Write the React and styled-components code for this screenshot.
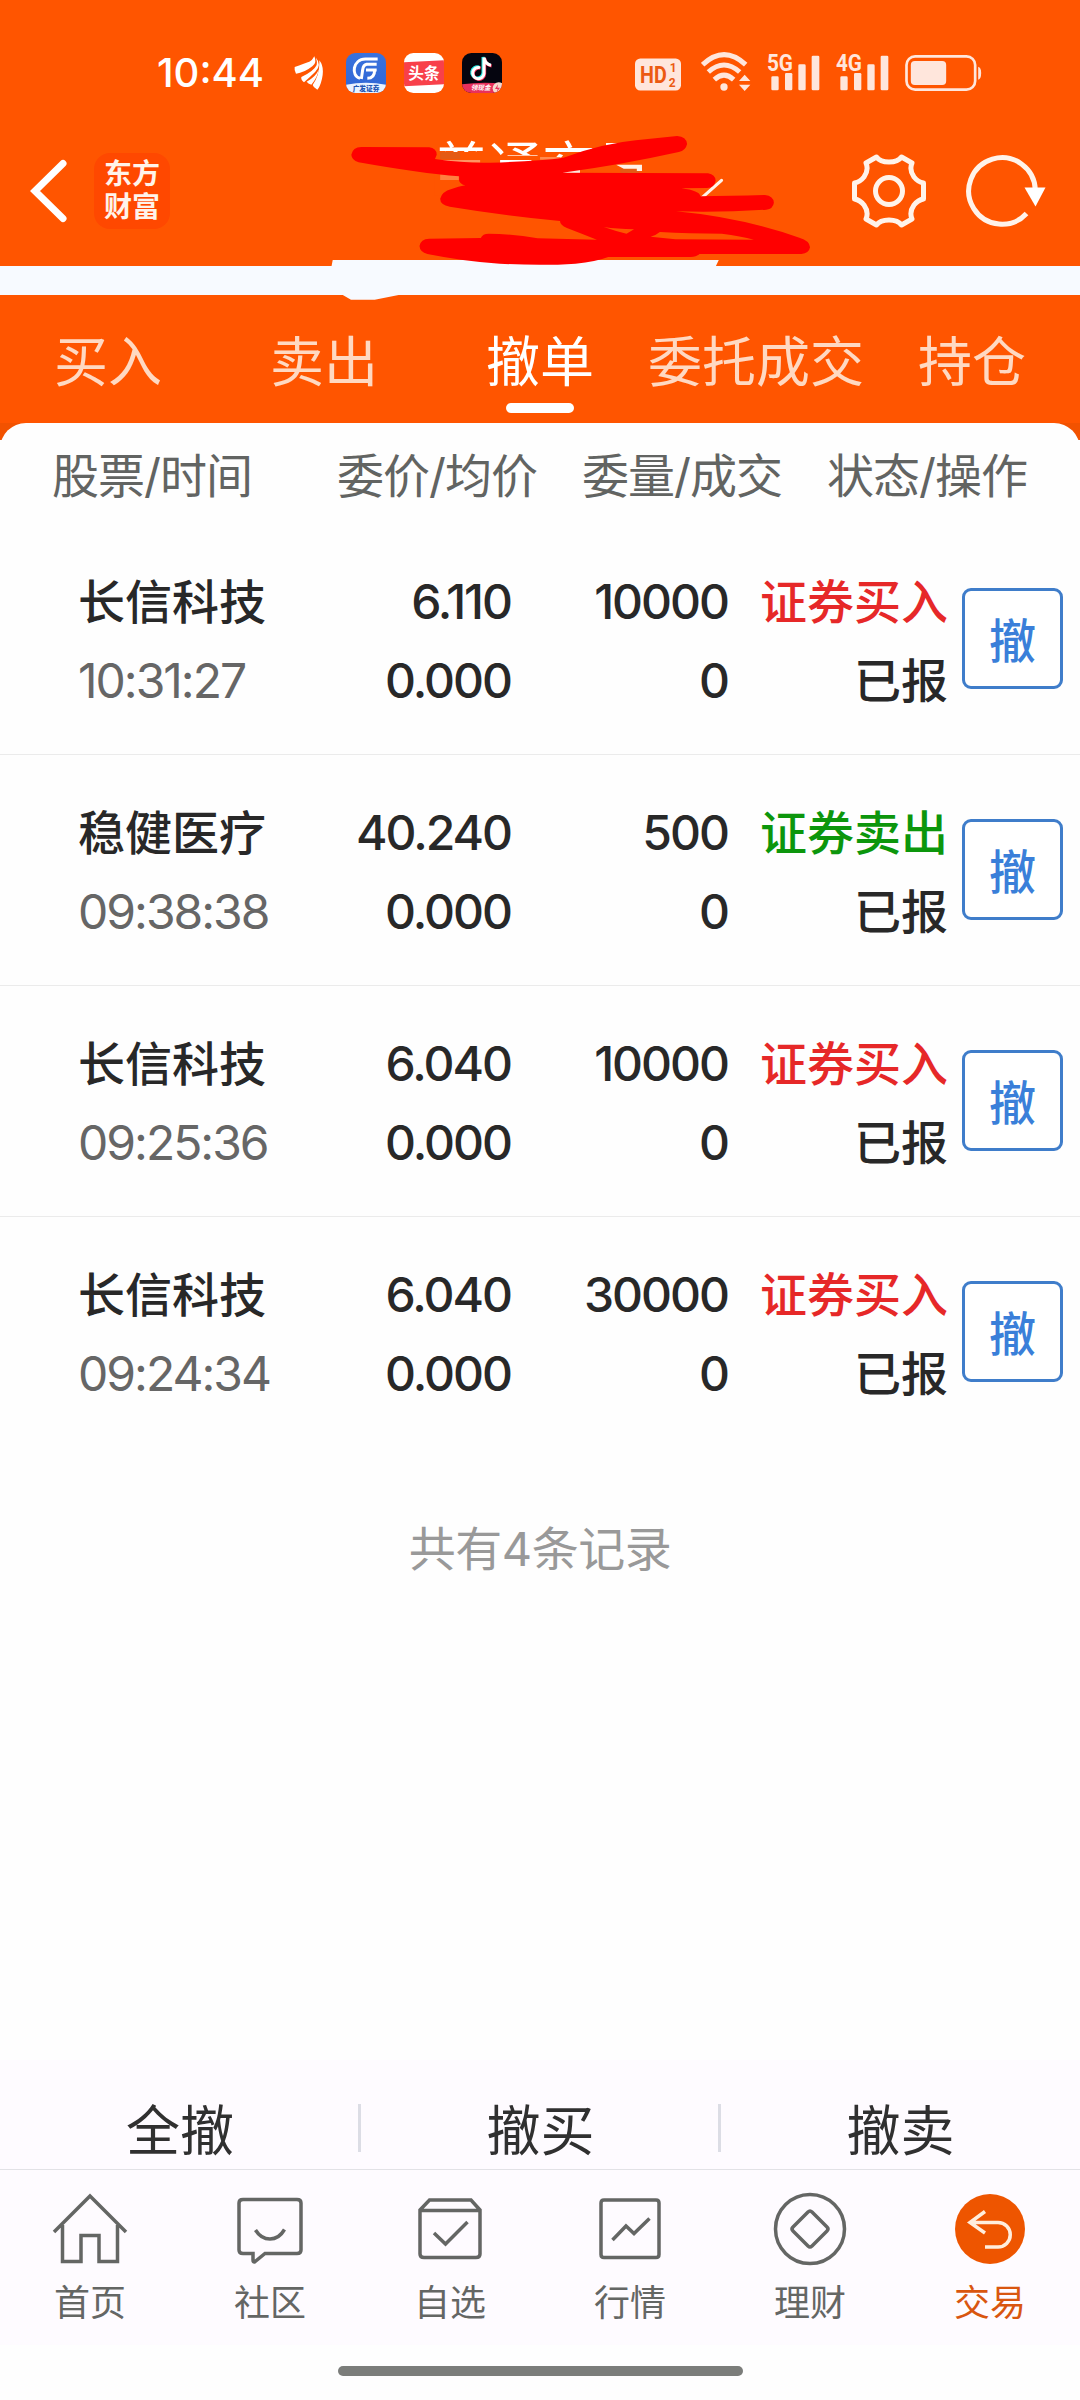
import React from 'react';
import styled, { createGlobalStyle } from 'styled-components';

const orders = [
    { id: 1, name: '长信科技', time: '10:31:27', price: '6.110', avg: '0.000', amount: '10000', done: '0', side: 'buy' },
    { id: 2, name: '稳健医疗', time: '09:38:38', price: '40.240', avg: '0.000', amount: '500', done: '0', side: 'sell' },
    { id: 3, name: '长信科技', time: '09:25:36', price: '6.040', avg: '0.000', amount: '10000', done: '0', side: 'buy' },
    { id: 4, name: '长信科技', time: '09:24:34', price: '6.040', avg: '0.000', amount: '30000', done: '0', side: 'buy' },
];

const tabs = ['买入', '卖出', '撤单', '委托成交', '持仓'];
const actions = ['全撤', '撤买', '撤卖'];

const menus = [
    { label: '首页', Icon: HomeIcon },
    { label: '社区', Icon: ChatIcon },
    { label: '自选', Icon: PickIcon },
    { label: '行情', Icon: ChartIcon },
    { label: '理财', Icon: WealthIcon },
    { label: '交易', Icon: TradeIcon, active: true },
];

function App() {
    return (
        <>
            <GlobalStyle />
            <StPage>
                <StatusBar />
                <TitleBar />
                <StStrip />
                <StTabs>
                    {tabs.map((tab) => (
                        <StTab key={tab} $active={tab === '撤单'}>
                            {tab}
                        </StTab>
                    ))}
                </StTabs>
                <StPanelBack>
                    <StPanel>
                        <StHead>
                            <span>股票/时间</span>
                            <span>委价/均价</span>
                            <span>委量/成交</span>
                            <span>状态/操作</span>
                        </StHead>
                        {orders.map((order, i) => (
                            <Order key={order.id} order={order} last={i === orders.length - 1} />
                        ))}
                        <StTotal>共有4条记录</StTotal>
                    </StPanel>
                </StPanelBack>
                <StActions>
                    {actions.map((action) => (
                        <StAction key={action}>{action}</StAction>
                    ))}
                </StActions>
                <StMenu>
                    {menus.map(({ label, Icon, active }) => (
                        <StMenuItem key={label} $active={active}>
                            <Icon />
                            <span>{label}</span>
                        </StMenuItem>
                    ))}
                </StMenu>
                <StGesture>
                    <StGestureBar />
                </StGesture>
            </StPage>
        </>
    );
}

export default App;

function Order({ order, last }) {
    const buy = order.side === 'buy';
    return (
        <StOrder $last={last}>
            <StCell $width={212} $left>
                <StName>{order.name}</StName>
                <StNum $gray>{order.time}</StNum>
            </StCell>
            <StCell $width={221}>
                <StNum>{order.price}</StNum>
                <StNum>{order.avg}</StNum>
            </StCell>
            <StCell $width={217}>
                <StNum>{order.amount}</StNum>
                <StNum>{order.done}</StNum>
            </StCell>
            <StCell $width={220}>
                <StName $color={buy ? '#e62828' : '#0c960c'}>{buy ? '证券买入' : '证券卖出'}</StName>
                <StName>已报</StName>
            </StCell>
            <StCancel>撤</StCancel>
        </StOrder>
    );
}

function StatusBar() {
    return (
        <StStatus>
            <StClock>10:44</StClock>
            <StNotices>
                <svg width="30" height="36" viewBox="490 74 90 108" fill="#fff">
                    <path d="M492 110 Q520 100 536 94 Q545 90 551 78 Q560 98 545 108 Q520 128 496 130 Q490 120 492 110Z" />
                    <path d="M556 82 Q574 104 554 124 Q536 142 520 156 Q510 148 512 140 Q550 122 558 104 Q560 94 556 82Z" />
                    <path d="M566 90 Q582 110 574 145 Q568 170 560 178 Q548 172 546 164 Q568 132 566 90Z" />
                    <path d="M564 118 Q562 138 542 163 Q532 160 528 154 Q556 138 564 118Z" />
                </svg>
                <svg width="40" height="40" viewBox="0 0 120 120">
                    <defs>
                        <clipPath id="app">
                            <rect width="120" height="120" rx="28" />
                        </clipPath>
                        <linearGradient id="blue" x1="0" y1="0" x2="0" y2="1">
                            <stop offset="0" stopColor="#3a72dc" />
                            <stop offset="1" stopColor="#2f66d6" />
                        </linearGradient>
                    </defs>
                    <g clipPath="url(#app)">
                        <rect width="120" height="120" fill="url(#blue)" />
                        <path d="M0 95 Q60 84 120 95 V120 H0Z" fill="#eaf2ff" />
                        <g fill="none" stroke="#fff" strokeWidth="9">
                            <path d="M95 18 H58 C20 18 14 70 42 76" />
                            <path d="M92 34 H62 Q52 36 50 50 L46 78" />
                            <path d="M92 51 H60 M86 51 Q86 76 64 76" />
                        </g>
                        <text x="20" y="113" fontSize="20" fontWeight="900" textLength="80" fill="#2357b4">
                            广发证券
                        </text>
                    </g>
                </svg>
                <svg width="40" height="40" viewBox="0 0 120 120">
                    <g clipPath="url(#app)">
                        <rect width="120" height="120" fill="#fff" />
                        <path d="M0 28 L120 22 V94 L0 100Z" fill="#f8404a" />
                        <text x="13" y="79" fontSize="47" fontWeight="700" textLength="94" fill="#fff">
                            头条
                        </text>
                    </g>
                </svg>
                <svg width="40" height="40" viewBox="0 0 120 120">
                    <g clipPath="url(#app)">
                        <rect width="120" height="120" fill="#05050f" />
                        <g fill="none" strokeWidth="9">
                            <path d="M54 44 A17 17 0 1 0 66 61 V14 Q70 34 87 37" stroke="#25e8e4" transform="translate(-3 -2)" />
                            <path d="M54 44 A17 17 0 1 0 66 61 V14 Q70 34 87 37" stroke="#f8335c" transform="translate(2 2)" />
                            <path d="M54 44 A17 17 0 1 0 66 61 V14 Q70 34 87 37" stroke="#fff" />
                        </g>
                        <path d="M0 94 Q60 86 120 92 V120 H0Z" fill="#e8305c" />
                        <text x="26" y="112" fontSize="20" fontWeight="700" fontStyle="italic" textLength="60" fill="#fff">
                            领现金
                        </text>
                        <circle cx="110" cy="106" r="18" fill="#f7d9cc" />
                        <path d="M108 94 L99 108 H107 L104 118 L114 104 H106Z" fill="#e8305c" />
                    </g>
                </svg>
            </StNotices>
            <StSignals>
                <svg width="46" height="33" viewBox="42 87 138 96">
                    <rect x="42" y="87" width="138" height="96" rx="16" fill="#ffe6dc" />
                    <g fill="#ec5a12" fontFamily="Roboto" fontWeight="700">
                        <text x="57" y="161" fontSize="74" textLength="80" lengthAdjust="spacingAndGlyphs">
                            HD
                        </text>
                        <text x="146" y="128" fontSize="36" textLength="19">
                            1
                        </text>
                        <text x="143" y="171" fontSize="36" textLength="22">
                            2
                        </text>
                    </g>
                </svg>
                <svg width="50" height="39" viewBox="240 66 150 117" fill="none" stroke="#ffe6dc" strokeWidth="15">
                    <path d="M245 104 Q309 44 374 104" />
                    <path d="M262 126 Q309 84 356 126" />
                    <path d="M280 149 Q309 122 338 149" />
                    <circle cx="309" cy="171" r="11" fill="#ffe6dc" stroke="none" />
                    <path d="M354 153 L371 134 L388 153Z M354 164 H388 L371 183Z" fill="#ffe6dc" stroke="none" />
                </svg>
                <Signal label="5G" />
                <Signal label="4G" />
                <svg width="77" height="36" viewBox="855 75 230 108">
                    <rect x="859" y="79" width="206" height="100" rx="26" fill="none" stroke="#ffe6dc" strokeWidth="8" />
                    <rect x="872" y="93" width="106" height="72" rx="12" fill="#ffe6dc" />
                    <path d="M1074 110 Q1083 112 1083 129 Q1083 147 1074 149Z" fill="#ffe6dc" />
                </svg>
            </StSignals>
        </StStatus>
    );
}

function Signal({ label }) {
    return (
        <svg width="53" height="44" viewBox="434 50 159 132" fill="#ffe6dc">
            <text x="434" y="121" fontSize="70" fontFamily="Roboto" fontWeight="700" textLength="78" lengthAdjust="spacingAndGlyphs">
                {label}
            </text>
            <rect x="447" y="138" width="22" height="42" rx="4" />
            <rect x="488" y="128" width="22" height="52" rx="4" />
            <rect x="528" y="102" width="22" height="78" rx="4" />
            <rect x="568" y="76" width="23" height="104" rx="4" />
        </svg>
    );
}

function TitleBar() {
    return (
        <StTitleBar>
            <StBack width="38" height="64" viewBox="0 0 38 64">
                <path d="M33 4.500 L5 32 L33 59.500" />
            </StBack>
            <StLogo>
                <span>东方</span>
                <span>财富</span>
            </StLogo>
            <StTitle>普通交易</StTitle>
            <StTools>
                <svg width="76" height="74" viewBox="-38 -37 76 74" fill="none" stroke="#fff3ea" strokeWidth="5">
                    <circle r="13.500" />
                    <path
                        strokeLinejoin="round"
                        d="M-12.500 -34 Q-9 -29 0 -29 Q9 -29 12.500 -34 L23 -28 Q20 -21 25 -14 Q29 -9 34.500 -8 V8 Q29 9 25 14 Q20 21 23 28 L12.500 34 Q9 29 0 29 Q-9 29 -12.500 34 L-23 28 Q-20 21 -25 14 Q-29 9 -34.500 8 V-8 Q-29 -9 -25 -14 Q-20 -21 -23 -28Z"
                    />
                </svg>
                <svg width="82" height="74" viewBox="-37 -37 82 74">
                    <path d="M24.500 22.500 A33.300 33.300 0 1 1 33.300 -1" fill="none" stroke="#fff3ea" strokeWidth="5" />
                    <path d="M22.500 -3.500 H43.500 L33.500 15.500Z" fill="#fff" />
                </svg>
            </StTools>
            <StScribble viewBox="0 0 1568 570" preserveAspectRatio="none">
                <path d="M91 442 L95 420 H1216 L1206 442Z M123 524 L148 539 H217 L290 524Z" fill="#f7faff" />
                <rect x="390" y="96" width="165" height="130" fill="#ff5500" />
                <rect x="550" y="107" width="150" height="60" fill="#ff5500" />
                <rect x="700" y="116" width="150" height="60" fill="#ff5500" />
                <rect x="850" y="84" width="160" height="80" fill="#ff5500" />
                <rect x="407" y="96" width="58" height="22" fill="#e45b14" />
                <rect x="395" y="120" width="128" height="8" fill="#ff9463" />
                <rect x="407" y="163" width="54" height="17" fill="#ff8040" />
                <rect x="581" y="120" width="91" height="9" fill="#fff" />
                <rect x="697" y="111" width="60" height="8" fill="#ff8a50" />
                <rect x="762" y="150" width="51" height="10" fill="#ffe9dc" />
                <path d="M930 146 H985 V159 H930Z" fill="#e45b14" />
                <path d="M918 134 H993 V153 H978 V146 H940Z" fill="#fff3ea" />
                <path d="M1165 235 L1224 181" stroke="#fff3ea" strokeWidth="9" strokeLinecap="round" />
                <path
                    fill="#ff0000"
                    fillRule="evenodd"
                    d="M149 104 Q153 82 178 81 L375 82 Q396 84 397 104 L392 117 Q480 130 552 128 Q690 124 765 113 Q880 70 975 61 L1095 48 Q1122 50 1124 72 Q1120 92 1100 96 Q930 135 762 158 L1185 160 Q1206 164 1207 182 Q1203 203 1182 204 L1108 205 Q1160 212 1163 229 Q1250 228 1350 225 Q1375 228 1376 248 Q1374 266 1354 269 Q1220 278 1092 274 Q1280 292 1450 353 Q1480 362 1481 382 Q1478 400 1456 402 L1160 402 Q1150 411 1135 411 L895 411 Q860 425 800 431 Q700 438 580 431 Q480 425 370 402 Q348 396 347 378 Q350 357 375 356 L525 354 Q530 341 548 341 Q620 342 690 355 L862 359 Q820 342 775 324 Q755 315 755 303 Q600 288 435 260 Q407 254 407 236 Q412 215 440 207 Q460 200 480 196 Q465 192 462 182 L462 169 Q350 160 170 127 Q150 120 149 104Z M882 321 Q920 327 970 328 L948 341 Q915 333 882 321Z M1045 336 Q1130 341 1225 341 Q1280 348 1318 359 L1090 358 L1018 350 Q1035 345 1045 336Z"
                />
            </StScribble>
        </StTitleBar>
    );
}

function HomeIcon() {
    return (
        <StMenuIcon viewBox="-38 -38 76 76">
            <path d="M-36 3 L0 -33 L36 3 M-27.500 -4 V32.500 H-9 V6.500 H9 V32.500 H27.500 V-4" />
        </StMenuIcon>
    );
}

function ChatIcon() {
    return (
        <StMenuIcon viewBox="-38 -38 76 76">
            <path d="M-27 -29.500 H27 Q31 -29.500 31 -26 V21 Q31 24.500 27 24.500 H-5 L-15.500 33 Q-17 33 -17 31 V24.500 H-27 Q-31 24.500 -31 21 V-26 Q-31 -29.500 -27 -29.500Z M-14.500 1 Q-9 10 0 10 Q9 10 14.500 0.500" />
        </StMenuIcon>
    );
}

function PickIcon() {
    return (
        <StMenuIcon viewBox="-38 -38 76 76">
            <path d="M-30 -19 L-20.500 -29 H21 L30 -19 V25 Q30 28.500 26 28.500 H-26 Q-30 28.500 -30 25Z M-30 -18.500 H30 M-16 4 L-4.500 15 L17.500 -7" />
        </StMenuIcon>
    );
}

function ChartIcon() {
    return (
        <StMenuIcon viewBox="-38 -38 76 76">
            <path d="M-26 -29 H26 Q29 -29 29 -26 V25.500 Q29 28.500 26 28.500 H-26 Q-29 28.500 -29 25.500 V-26 Q-29 -29 -26 -29Z M-17.500 11 L-4 -3 L4 4.500 L19.500 -10.500" />
        </StMenuIcon>
    );
}

function WealthIcon() {
    return (
        <StMenuIcon viewBox="-38 -38 76 76">
            <circle r="34.500" />
            <path d="M-2 -17 Q0 -19 2 -17 L17 -2 Q19 0 17 2 L2 17 Q0 19 -2 17 L-17 2 Q-19 0 -17 -2Z" />
        </StMenuIcon>
    );
}

function TradeIcon() {
    return (
        <StMenuIcon viewBox="-38 -38 76 76">
            <circle r="35" fill="#ee5500" stroke="none" />
            <path d="M-5 -17.500 L-20 -6.500 L-5 4 M-19 -6.500 H8 A12 12 0 0 1 8 18 H-5" stroke="#ffeedd" />
        </StMenuIcon>
    );
}

const GlobalStyle = createGlobalStyle`
    body {
        margin: 0;
        font-family: Inter, 'Noto Sans CJK SC', sans-serif;
    }
`;

const StPage = styled.div`
    width: 1080px;
    height: 2400px;
    display: flex;
    flex-direction: column;
    overflow: hidden;
    background-color: #fdfdfd;
`;

const StStatus = styled.div`
    height: 115px;
    box-sizing: border-box;
    padding: 30px 98px 0 157px;
    display: flex;
    align-items: center;
    background-color: #ff5500;
    color: #fff;
`;

const StClock = styled.div`
    width: 137px;
    font-size: 40px;
    line-height: 50px;
    font-weight: 500;
`;

const StNotices = styled.div`
    display: flex;
    align-items: center;
    gap: 18px;

    svg:first-child {
        margin-right: 4px;
    }
`;

const StSignals = styled.div`
    height: 38px;
    margin: -2px 0 0 auto;
    display: flex;
    align-items: flex-end;
    gap: 16px;

    svg:first-child {
        margin-right: 4px;
    }
`;

const StTitleBar = styled.div`
    position: relative;
    height: 151px;
    display: flex;
    align-items: center;
    background-color: #ff5500;
`;

const StBack = styled.svg`
    margin-left: 30px;
    fill: none;
    stroke: #fff;
    stroke-width: 7;
    stroke-linecap: round;
`;

const StLogo = styled.div`
    width: 76px;
    height: 76px;
    margin-left: 26px;
    display: flex;
    flex-direction: column;
    align-items: center;
    justify-content: center;
    border-radius: 16px;
    background-color: #ff4800;
    color: #fff3ea;
    font-size: 28px;
    line-height: 33px;
    font-weight: 700;
`;

const StTitle = styled.div`
    margin: -46px 0 0 264px;
    color: #fff;
    font-size: 54px;
    line-height: 60px;
`;

const StTools = styled.div`
    margin: 0 33px 0 auto;
    display: flex;
    gap: 38px;
`;

/* hand drawn cover over the account name */
const StScribble = styled.svg`
    position: absolute;
    left: 300px;
    top: 5px;
    width: 540px;
    height: 190px;
    z-index: 1;
`;

const StStrip = styled.div`
    height: 29px;
    background-color: #f7faff;
`;

const StTabs = styled.div`
    height: 128px;
    display: grid;
    grid-template-columns: repeat(5, 216px);
    background-color: #ff5500;
`;

const StTab = styled.div`
    display: flex;
    flex-direction: column;
    align-items: center;
    padding-top: 34px;
    color: ${({ $active }) => ($active ? '#fff' : '#ffd9c2')};
    font-size: 54px;
    line-height: 68px;
    white-space: nowrap;

    &::after {
        content: '';
        width: 68px;
        height: 10px;
        margin-top: 6px;
        border-radius: 5px;
        background-color: ${({ $active }) => ($active ? '#fff' : 'transparent')};
    }
`;

const StPanelBack = styled.div`
    flex: 1;
    background: linear-gradient(#f25200 17px, #fefefe 17px);
`;

const StPanel = styled.div`
    height: 100%;
    border-radius: 26px 26px 0 0;
    background-color: #fefefe;
`;

const StHead = styled.div`
    height: 101px;
    padding-left: 52px;
    display: grid;
    grid-template-columns: 285px 245px 245px auto;
    color: #626462;
    font-size: 47px;
    line-height: 106px;
    letter-spacing: -1px;
    white-space: nowrap;
`;

const StOrder = styled.div`
    height: 231px;
    box-sizing: border-box;
    padding: 38px 17px 0 78px;
    display: flex;
    border-bottom: 1px solid ${({ $last }) => ($last ? 'transparent' : '#ebebeb')};
`;

const StCell = styled.div`
    width: ${({ $width }) => $width}px;
    display: flex;
    flex-direction: column;
    align-items: ${({ $left }) => ($left ? 'flex-start' : 'flex-end')};
    white-space: nowrap;
`;

const StName = styled.div`
    color: ${({ $color }) => $color || '#282828'};
    font-size: 47px;
    line-height: 79px;
    font-weight: 500;
`;

const StNum = styled.div`
    color: ${({ $gray }) => ($gray ? '#666' : '#282828')};
    font-size: 48px;
    line-height: 79px;
    font-weight: ${({ $gray }) => ($gray ? 400 : 500)};
    letter-spacing: -2px;
`;

const StCancel = styled.button`
    width: 101px;
    height: 101px;
    margin: 26px 0 0 auto;
    padding: 5px 0 0;
    border: 3px solid #3f7dca;
    border-radius: 9px;
    background-color: #fff;
    color: #3a7fd9;
    font-family: inherit;
    font-size: 47px;
    line-height: 90px;
    font-weight: 500;
`;

const StTotal = styled.div`
    padding-top: 61px;
    text-align: center;
    color: #999;
    font-size: 47px;
    line-height: 80px;
    letter-spacing: -0.5px;
`;

const StActions = styled.div`
    height: 109px;
    display: grid;
    grid-template-columns: repeat(3, 360px);
    align-items: center;
    background-color: #fefbff;
    border-bottom: 1px solid #e2e2e6;
`;

const StAction = styled.div`
    height: 48px;
    margin-top: 26px;
    text-align: center;
    color: #303030;
    font-size: 54px;
    line-height: 55px;

    & + & {
        margin-left: -2px;
        border-left: 3px solid #dcdde5;
    }
`;

const StMenu = styled.div`
    height: 175px;
    display: grid;
    grid-template-columns: repeat(6, 180px);
    background-color: #fefbff;
`;

const StMenuItem = styled.div`
    padding-top: 21px;
    display: flex;
    flex-direction: column;
    align-items: center;
    color: ${({ $active }) => ($active ? '#d9560f' : '#646664')};
    font-size: 36px;
    line-height: 72px;
`;

const StMenuIcon = styled.svg`
    width: 76px;
    height: 76px;
    fill: none;
    stroke: #646664;
    stroke-width: 3.5;
`;

const StGesture = styled.div`
    height: 55px;
    display: flex;
    justify-content: center;
    background-color: #fefefe;
`;

const StGestureBar = styled.div`
    width: 405px;
    height: 10px;
    margin-top: 21px;
    border-radius: 5px;
    background-color: #7b7d7a;
`;
